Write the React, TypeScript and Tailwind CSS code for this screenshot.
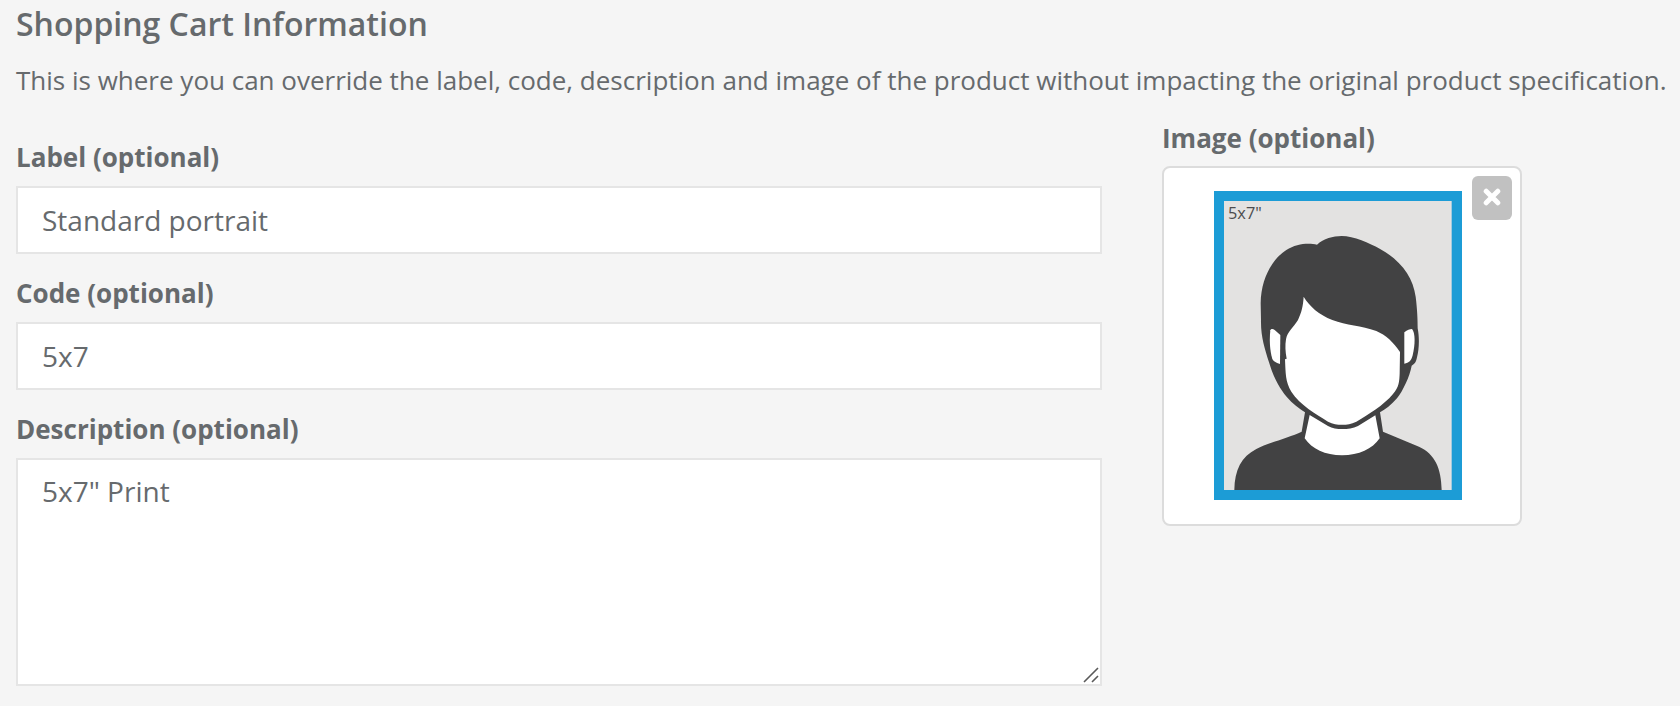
import { useState } from 'react';

function PortraitPreview() {
  return (
    <svg
      viewBox="193 243 744 927"
      className="w-[248px] h-[309px]"
      role="img"
      aria-label="Portrait preview"
    >
      <rect x="193" y="243" width="744" height="927" fill="#1c9cd6" />
      <rect x="223" y="273" width="683" height="867" fill="#e3e2e1" />
      {/* hair, head outline, neck and shoulders */}
      <path
        fill="#424243"
        d="M502 404C522 386 550 378 576 378C612 378 660 400 690 416C752 450 790 500 798 560C803 600 804 630 804 655C810 685 808 720 802 742C799 757 795 762 786 767C780 800 760 842 742 865C725 885 707 898 691 907L700 965L808 1010C856 1032 875 1075 876 1140H254C255 1080 275 1040 320 1017C360 997 420 982 456 965L466 907C430 883 386 850 358 757C345 715 333 680 334 630L333 580C334 500 372 444 410 420C440 400 478 398 502 404Z"
      />
      <path
        fill="#fff"
        d="M462 560C480 590 508 614 548 630C590 647 635 646 680 663C708 675 732 697 751 726L750 790C749 815 748 832 730 852C702 886 655 914 620 935C604 943 592 944 578 944C562 944 550 943 535 935C500 912 450 885 425 845C407 815 408 790 406 748L411 746C407 725 406 705 409 688C413 665 432 652 445 630C456 605 460 590 462 560Z"
      />
      <path
        fill="#fff"
        d="M480 915L535 948C548 956 562 957 578 957C594 957 610 956 625 948L677 916L690 985C668 1017 628 1036 577 1036C526 1036 487 1017 465 985Z"
      />
      <path
        fill="#fff"
        d="M362 661C364 656 370 656 375 660L392 675L391 762C378 758 371 754 368 747C360 720 359 690 362 661Z"
      />
      <path
        fill="#fff"
        d="M764 667C773 660 780 657 787 657C797 668 797 702 789 736C785 752 778 759 764 761Z"
      />
      <text x="235" y="328" fontSize="49" fill="#4c4c4e">
        5x7&quot;
      </text>
    </svg>
  );
}

const labelClass = 'block text-[26px] leading-9 font-bold';
const inputClass =
  'block w-full border-2 border-[#e5e5e5] bg-white px-6 text-[28px] leading-10 outline-none focus:border-[#1c9cd6]';

export default function App() {
  const [label, setLabel] = useState('Standard portrait');
  const [code, setCode] = useState('5x7');
  const [description, setDescription] = useState('5x7" Print');
  const [hasImage, setHasImage] = useState(true);

  return (
    <div className="min-h-screen bg-[#f5f5f5] pt-0.5 pb-5 pl-4 pr-2 font-['Open_Sans',sans-serif] text-[#666a6d]">
      <h2 className="text-[32px] leading-11 font-semibold">Shopping Cart Information</h2>
      <p className="mt-4 text-[26px] leading-9">
        This is where you can override the label, code, description and image of the product without
        impacting the original product specification.
      </p>

      <div className="mt-[22px] flex items-start gap-[60px]">
        <form className="flex min-w-0 flex-1 flex-col gap-[21px] pt-[19px]">
          <div className="flex flex-col gap-[11px]">
            <label htmlFor="label" className={labelClass}>
              Label (optional)
            </label>
            <input
              id="label"
              type="text"
              value={label}
              onChange={(e) => setLabel(e.target.value)}
              className={`${inputClass} h-[68px]`}
            />
          </div>
          <div className="flex flex-col gap-[11px]">
            <label htmlFor="code" className={labelClass}>
              Code (optional)
            </label>
            <input
              id="code"
              type="text"
              value={code}
              onChange={(e) => setCode(e.target.value)}
              className={`${inputClass} h-[68px]`}
            />
          </div>
          <div className="flex flex-col gap-[11px]">
            <label htmlFor="description" className={labelClass}>
              Description (optional)
            </label>
            <div className="relative">
              <textarea
                id="description"
                value={description}
                onChange={(e) => setDescription(e.target.value)}
                className={`${inputClass} h-[228px] resize-none py-[11px]`}
              />
              <svg
                viewBox="0 0 16 16"
                className="pointer-events-none absolute right-[3px] bottom-[3px] h-4 w-4"
                stroke="#5a5a5a"
                strokeWidth="1.6"
                aria-hidden="true"
              >
                <path d="M1 15L15 1M9 15L15 9" />
              </svg>
            </div>
          </div>
        </form>

        <div className="w-[510px]">
          <h3 className={labelClass}>Image (optional)</h3>
          <div className="relative mt-2.5 h-[360px] w-[360px] rounded-lg border-2 border-[#dcdcdc] bg-white pt-[23px] pl-[50px]">
            {hasImage && (
              <>
                <PortraitPreview />
                <button
                  type="button"
                  aria-label="Remove image"
                  onClick={() => setHasImage(false)}
                  className="absolute top-2 right-2 flex h-11 w-10 justify-center rounded-md bg-[#c1c1c1] pt-3 hover:bg-[#aaaaaa]"
                >
                  <svg
                    viewBox="0 0 18 18"
                    className="h-[18px] w-[18px]"
                    stroke="#fff"
                    strokeWidth="5"
                    strokeLinecap="round"
                    aria-hidden="true"
                  >
                    <path d="M3.2 3.2L14.8 14.8M14.8 3.2L3.2 14.8" />
                  </svg>
                </button>
              </>
            )}
          </div>
        </div>
      </div>
    </div>
  );
}
